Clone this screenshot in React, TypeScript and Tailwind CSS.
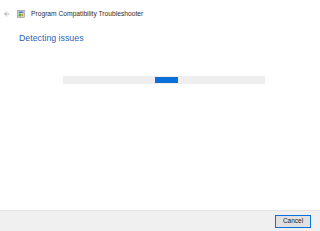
export default function App() {
    return (
        <div className="w-[320px] h-[231px] bg-white flex flex-col overflow-hidden" style={{ fontFamily: '"Liberation Sans", Arial, sans-serif' }}>
            <div className="flex-1 flex flex-col">
                {/* title bar */}
                <div className="h-[28px] flex items-center">
                    <svg className="ml-[4px] w-[6px] h-[6px]" viewBox="0 0 6 6" fill="none" stroke="#a0a0a0" strokeWidth="0.8">
                        <path d="M5.5 3H0.6M3 0.6L0.6 3L3 5.4" />
                    </svg>
                    <svg className="ml-[7px] w-[8px] h-[8px]" viewBox="0 0 8 8">
                        <rect x="0.5" y="0.5" width="7" height="7" fill="#e8e8e8" stroke="#8a8a8a" strokeWidth="0.6" />
                        <rect x="1.5" y="1.5" width="5" height="1.3" fill="#3b6fb6" />
                        <rect x="1.5" y="3.5" width="2.5" height="3" fill="#5fa84a" />
                        <rect x="4.3" y="3.5" width="2.2" height="3" fill="#d9a53a" />
                    </svg>
                    <span className="ml-[6px] text-[6.7px] leading-none text-[#2b2b2b]">Program Compatibility Troubleshooter</span>
                </div>
                <div className="pl-[19px] pt-[6px] text-[8.8px] leading-none text-[#2f5fb5]">Detecting issues</div>
                <div className="mt-[33px] ml-[63px] w-[202px] h-[8px] bg-[#eeeeee] flex">
                    <div className="ml-[92px] my-[1px] w-[23px] bg-[#0a6fd8]" />
                </div>
            </div>
            <div className="h-[21px] bg-[#f0f0f0] border-t border-[#e3e3e3] flex items-center justify-end pr-[9px]">
                <button className="w-[36px] h-[13px] bg-[#e1e1e1] border border-[#0a6fd8] text-[6.5px] leading-none text-[#1a1a1a] flex items-center justify-center">
                    Cancel
                </button>
            </div>
        </div>
    );
}
